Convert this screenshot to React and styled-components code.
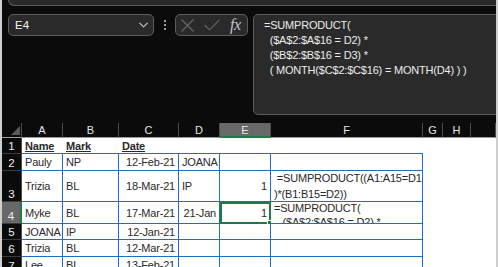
import React from "react";
import styled, { createGlobalStyle } from "styled-components";

const Global = createGlobalStyle`
  html, body { margin: 0; padding: 0; background: #0b0b0b; }
  * { box-sizing: border-box; }
`;

const Frame = styled.div`
  width: 498px;
  height: 267px;
  overflow: hidden;
  background: #0b0b0b;
  border-left: 2px solid #cfcfcf;
  border-right: 2px solid #cfcfcf;
  font-family: "Liberation Sans", Arial, sans-serif;
`;

const TopStrip = styled.div`
  height: 6px;
  margin-left: 6px;
  margin-right: -8px;
  background: #2a2a2a;
  border: 1px solid #5c5c5c;
  border-top: none;
  border-radius: 0 0 6px 6px;
`;

const FormulaRow = styled.div`
  display: flex;
  align-items: flex-start;
  margin-top: 8px;
  padding-left: 6px;
  height: 101px;
`;

const Box = styled.div`
  background: #2a2a2a;
  border: 1px solid #5c5c5c;
  border-radius: 5px;
`;

const NameBox = styled(Box)`
  width: 146px;
  height: 22px;
  display: flex;
  align-items: center;
  justify-content: space-between;
  padding: 0 5px 0 6px;
  color: #f4f4f4;
  font-size: 11.5px;
`;

const Dots = styled.div`
  width: 21px;
  height: 22px;
  display: flex;
  flex-direction: column;
  align-items: center;
  justify-content: center;
  gap: 2px;
  span {
    width: 2px;
    height: 2px;
    background: #9c9c9c;
  }
`;

const IconBox = styled(Box)`
  width: 73px;
  height: 22px;
  display: flex;
  align-items: center;
  justify-content: space-between;
  padding: 0 4px 0 5px;
`;

const Fx = styled.span`
  font-family: "Liberation Serif", "Times New Roman", serif;
  font-style: italic;
  font-size: 16px;
  color: #c4c4c4;
  letter-spacing: -0.5px;
  line-height: 1;
  width: 13px;
`;

const FormulaBox = styled(Box)`
  flex: 1;
  margin-left: 5px;
  margin-right: -8px;
  height: 101px;
  padding: 3px 10px;
  color: #ececec;
  font-size: 11px;
  letter-spacing: -0.2px;
  line-height: 15px;
  white-space: pre;
`;

const Sheet = styled.div`
  margin-top: 8px;
  display: grid;
  grid-template-columns: 20px 41px 56px 60px 41px 51px 152px 20px 28px 1fr;
  grid-template-rows: 15px 16px 17px 31px 22px 16px 17px 17px;
  font-size: 11px;
`;

const HeadCell = styled.div`
  display: flex;
  align-items: center;
  justify-content: center;
  color: #e6e6e6;
  background: ${(p) => (p.$active ? "#686868" : "#0b0b0b")};
  border-right: 1px solid #4c4c4c;
  border-bottom: ${(p) => (p.$active ? "2px solid #1f7a45" : "1px solid #9a9a9a")};
  position: relative;
`;

const Corner = styled(HeadCell)`
  border-right: 1px solid #4c4c4c;
  svg { position: absolute; right: 1px; bottom: 2px; }
`;

const RowHead = styled.div`
  display: flex;
  align-items: flex-end;
  justify-content: center;
  padding-bottom: 1px;
  color: #eeeeee;
  font-size: 11.5px;
  background: ${(p) => (p.$active ? "#686868" : "#0b0b0b")};
  border-bottom: 1px solid #3a3a3a;
  border-right: ${(p) => (p.$active ? "2px solid #1f7a45" : "1px solid #4c4c4c")};
`;

const Cell = styled.div`
  position: relative;
  background: #ffffff;
  color: #2a2a2a;
  display: flex;
  align-items: center;
  justify-content: ${(p) => (p.$align === "right" ? "flex-end" : "flex-start")};
  padding: 0 3px;
  letter-spacing: -0.2px;
  white-space: pre;
  overflow: ${(p) => (p.$clip ? "hidden" : "visible")};
  border-right: ${(p) => (p.$right ? "1px solid #1a6fc4" : "none")};
  border-bottom: ${(p) => (p.$bottom ? "1px solid #1a6fc4" : "none")};
  font-weight: ${(p) => (p.$bold ? 700 : 400)};
  text-decoration: ${(p) => (p.$bold ? "underline" : "none")};
`;

const Lines = styled.div`
  display: flex;
  flex-direction: column;
  line-height: ${(p) => p.$lh}px;
  align-self: ${(p) => (p.$top ? "flex-start" : "center")};
  margin-top: ${(p) => (p.$top ? "-1px" : "0")};
`;

const Selection = styled.div`
  position: absolute;
  top: 0;
  left: 0;
  right: -1px;
  bottom: -1px;
  border: 2px solid #1f7a45;
  pointer-events: none;
`;

const Handle = styled.div`
  position: absolute;
  right: -4px;
  bottom: -4px;
  width: 6px;
  height: 6px;
  background: #1f7a45;
  border: 1px solid #ffffff;
`;

const colLetters = ["A", "B", "C", "D", "E", "F", "G", "H", ""];

const rows = [
  { n: 1, cells: [{ t: "Name", b: true }, { t: "Mark", b: true }, { t: "Date", b: true }, {}, {}, {}] },
  { n: 2, cells: [{ t: "Pauly" }, { t: "NP" }, { t: "12-Feb-21", r: true }, { t: "JOANA" }, {}, {}] },
  {
    n: 3,
    cells: [
      { t: "Trizia" },
      { t: "BL" },
      { t: "18-Mar-21", r: true },
      { t: "IP" },
      { t: "1", r: true },
      { lines: [" =SUMPRODUCT((A1:A15=D1", ")*(B1:B15=D2))"], lh: 16 },
    ],
  },
  {
    n: 4,
    active: true,
    cells: [
      { t: "Myke" },
      { t: "BL" },
      { t: "17-Mar-21", r: true },
      { t: "21-Jan", r: true },
      { t: "1", r: true, sel: true },
      {
        lines: ["=SUMPRODUCT(", "   ($A$2:$A$16 = D2) *", "   ($B$2:$B$16 = D3) *"],
        lh: 14,
        top: true,
      },
    ],
  },
  { n: 5, cells: [{ t: "JOANA" }, { t: "IP" }, { t: "12-Jan-21", r: true }, {}, {}, {}] },
  { n: 6, cells: [{ t: "Trizia" }, { t: "BL" }, { t: "12-Mar-21", r: true }, {}, {}, {}] },
  { n: 7, cells: [{ t: "Lee" }, { t: "BL" }, { t: "13-Feb-21", r: true }, {}, {}, {}] },
];

function Chevron() {
  return (
    <svg width="9" height="6" viewBox="0 0 9 6">
      <path d="M0.5 0.8L4.5 4.8L8.5 0.8" fill="none" stroke="#cfcfcf" strokeWidth="1.1" />
    </svg>
  );
}

export default function App() {
  return (
    <>
      <Global />
      <Frame>
        <TopStrip />
        <FormulaRow>
          <NameBox>
            <span>E4</span>
            <Chevron />
          </NameBox>
          <Dots>
            <span />
            <span />
            <span />
          </Dots>
          <IconBox>
            <svg width="13" height="13" viewBox="0 0 13 13">
              <path d="M0.5 0.5L12.5 12.5M12.5 0.5L0.5 12.5" stroke="#6a6a6a" strokeWidth="1.1" />
            </svg>
            <svg width="16" height="12" viewBox="0 0 16 12">
              <path d="M0.6 6L5.5 10.8L15.4 0.8" fill="none" stroke="#6a6a6a" strokeWidth="1.1" />
            </svg>
            <Fx>fx</Fx>
          </IconBox>
          <FormulaBox>
            {"=SUMPRODUCT(\n  ($A$2:$A$16 = D2) *\n  ($B$2:$B$16 = D3) *\n  ( MONTH($C$2:$C$16) = MONTH(D4) ) )"}
          </FormulaBox>
        </FormulaRow>
        <Sheet>
          <Corner>
            <svg width="9" height="9" viewBox="0 0 9 9">
              <path d="M9 0L9 9L0 9Z" fill="#5a5a5a" />
            </svg>
          </Corner>
          {colLetters.map((c, i) => (
            <HeadCell key={i} $active={c === "E"}>
              {c}
            </HeadCell>
          ))}
          {rows.map((row) => (
            <React.Fragment key={row.n}>
              <RowHead $active={row.active}>{row.n}</RowHead>
              {row.cells.map((c, i) => (
                <Cell
                  key={i}
                  $align={c.r ? "right" : "left"}
                  $bold={c.b}
                  $right={row.n >= 2}
                  $bottom={true}
                  $clip={!!c.lines}
                >
                  {c.lines ? (
                    <Lines $lh={c.lh} $top={c.top}>
                      {c.lines.map((l, k) => (
                        <span key={k}>{l}</span>
                      ))}
                    </Lines>
                  ) : (
                    c.t
                  )}
                  {c.sel && (
                    <Selection>
                      <Handle />
                    </Selection>
                  )}
                </Cell>
              ))}
              <Cell />
              <Cell />
              <Cell />
            </React.Fragment>
          ))}
        </Sheet>
      </Frame>
    </>
  );
}
